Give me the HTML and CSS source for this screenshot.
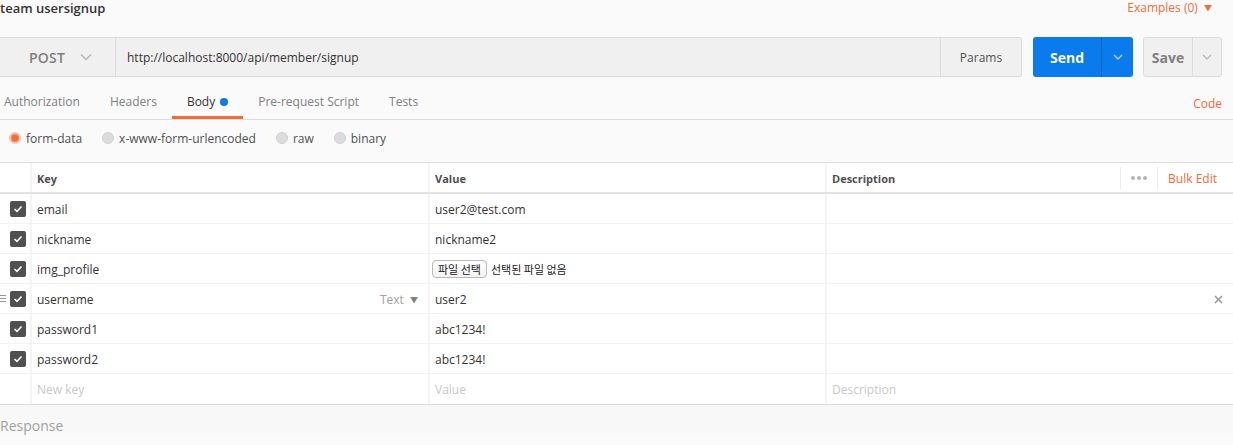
FILE: index.html
```html
<!DOCTYPE html>
<html>
<head>
<meta charset="utf-8">
<link rel="stylesheet" href="styles.css">
</head>
<body>
<div class="page">
  <div class="titlebar">
    <div class="title">team usersignup</div>
    <div class="examples">Examples (0) <span class="caret">&#9660;</span></div>
  </div>

  <div class="urlbar">
    <div class="method">
      <span class="method-name">POST</span>
      <svg class="chev" width="12" height="8" viewBox="0 0 12 8"><path d="M1 1.5 L6 6.5 L11 1.5" fill="none" stroke="#b4b4b4" stroke-width="1.3"/></svg>
    </div>
    <div class="url">http://localhost:8000/api/member/signup</div>
    <div class="params">Params</div>
    <div class="send">
      <span class="send-label">Send</span>
      <span class="send-drop"><svg width="10" height="6" viewBox="0 0 10 6"><path d="M1 1 L5 5 L9 1" fill="none" stroke="#b8d6f8" stroke-width="1.3"/></svg></span>
    </div>
    <div class="save">
      <span class="save-label">Save</span>
      <span class="save-drop"><svg width="10" height="6" viewBox="0 0 10 6"><path d="M1 1 L5 5 L9 1" fill="none" stroke="#b4b4b4" stroke-width="1.1"/></svg></span>
    </div>
  </div>

  <div class="tabs">
    <div class="tablist">
      <div class="tab">Authorization</div>
      <div class="tab">Headers</div>
      <div class="tab active">Body <span class="dot"></span></div>
      <div class="tab">Pre-request Script</div>
      <div class="tab">Tests</div>
    </div>
    <div class="code">Code</div>
  </div>

  <div class="modes">
    <label class="mode"><span class="radio on"></span>form-data</label>
    <label class="mode"><span class="radio"></span>x-www-form-urlencoded</label>
    <label class="mode"><span class="radio"></span>raw</label>
    <label class="mode"><span class="radio"></span>binary</label>
  </div>

  <div class="table">
    <div class="row head">
      <div class="cell chk"></div>
      <div class="cell">Key</div>
      <div class="cell">Value</div>
      <div class="cell desc-head">
        <span>Description</span>
        <span class="head-actions">
          <span class="more"><i></i><i></i><i></i></span>
          <span class="bulk">Bulk Edit</span>
        </span>
      </div>
    </div>

    <div class="row">
      <div class="cell chk"><span class="box"><svg width="10" height="8" viewBox="0 0 10 8"><path d="M1.5 4 L4 6.3 L8.5 1.5" fill="none" stroke="#fff" stroke-width="1.6"/></svg></span></div>
      <div class="cell">email</div>
      <div class="cell">user2@test.com</div>
      <div class="cell"></div>
    </div>
    <div class="row">
      <div class="cell chk"><span class="box"><svg width="10" height="8" viewBox="0 0 10 8"><path d="M1.5 4 L4 6.3 L8.5 1.5" fill="none" stroke="#fff" stroke-width="1.6"/></svg></span></div>
      <div class="cell">nickname</div>
      <div class="cell">nickname2</div>
      <div class="cell"></div>
    </div>
    <div class="row">
      <div class="cell chk"><span class="box"><svg width="10" height="8" viewBox="0 0 10 8"><path d="M1.5 4 L4 6.3 L8.5 1.5" fill="none" stroke="#fff" stroke-width="1.6"/></svg></span></div>
      <div class="cell">img_profile</div>
      <div class="cell file"><span class="filebtn">파일 선택</span><span class="filetext">선택된 파일 없음</span></div>
      <div class="cell"></div>
    </div>
    <div class="row">
      <div class="cell chk"><span class="handle"></span><span class="box"><svg width="10" height="8" viewBox="0 0 10 8"><path d="M1.5 4 L4 6.3 L8.5 1.5" fill="none" stroke="#fff" stroke-width="1.6"/></svg></span></div>
      <div class="cell keytype"><span>username</span><span class="type">Text <span class="tcaret">&#9660;</span></span></div>
      <div class="cell">user2</div>
      <div class="cell del"><svg width="9" height="9" viewBox="0 0 9 9"><path d="M1 1 L8 8 M8 1 L1 8" stroke="#9a9a9a" stroke-width="1.5"/></svg></div>
    </div>
    <div class="row">
      <div class="cell chk"><span class="box"><svg width="10" height="8" viewBox="0 0 10 8"><path d="M1.5 4 L4 6.3 L8.5 1.5" fill="none" stroke="#fff" stroke-width="1.6"/></svg></span></div>
      <div class="cell">password1</div>
      <div class="cell">abc1234!</div>
      <div class="cell"></div>
    </div>
    <div class="row">
      <div class="cell chk"><span class="box"><svg width="10" height="8" viewBox="0 0 10 8"><path d="M1.5 4 L4 6.3 L8.5 1.5" fill="none" stroke="#fff" stroke-width="1.6"/></svg></span></div>
      <div class="cell">password2</div>
      <div class="cell">abc1234!</div>
      <div class="cell"></div>
    </div>
    <div class="row last">
      <div class="cell chk"></div>
      <div class="cell ph">New key</div>
      <div class="cell ph">Value</div>
      <div class="cell ph">Description</div>
    </div>
  </div>

  <div class="response">Response</div>
</div>
</body>
</html>
```

FILE: styles.css
```css
* { box-sizing: border-box; }
html, body { margin: 0; padding: 0; }
body {
  background: #fafafa;
  font-family: "Open Sans", "Noto Sans CJK KR", sans-serif;
  color: #505050;
  width: 1233px;
  height: 445px;
  overflow: hidden;
}
.page { display: flex; flex-direction: column; }

.titlebar {
  display: flex;
  justify-content: space-between;
  align-items: flex-start;
  height: 37px;
  padding-right: 21px;
}
.title {
  font-size: 13px;
  font-weight: 600;
  color: #333;
  line-height: 16px;
}
.examples {
  font-size: 12px;
  color: #f26b3a;
  line-height: 16px;
}
.caret { font-size: 8px; margin-left: 3px; position: relative; top: -1px; }

.urlbar {
  display: flex;
  height: 40px;
  padding-right: 11px;
}
.method {
  width: 116px;
  display: flex;
  align-items: center;
  padding-left: 29px;
  background: #f0f0f0;
  border-top: 1px solid #dcdcdc;
  border-bottom: 1px solid #dcdcdc;
  border-right: 1px solid #dcdcdc;
}
.method-name { font-size: 14px; font-weight: 600; color: #808080; letter-spacing: 0.2px; }
.chev { margin-left: 15px; }
.url {
  flex: 1;
  display: flex;
  align-items: center;
  padding-left: 11px;
  font-size: 12px;
  color: #333;
  background: #f0f0f0;
  border-top: 1px solid #dcdcdc;
  border-bottom: 1px solid #dcdcdc;
  border-right: 1px solid #dcdcdc;
}
.params {
  width: 81px;
  display: flex;
  align-items: center;
  justify-content: center;
  font-size: 12px;
  color: #505050;
  background: #f0f0f0;
  border: 1px solid #dcdcdc;
  border-left: none;
  border-radius: 0 3px 3px 0;
}
.send {
  margin-left: 11px;
  width: 100px;
  display: flex;
  background: #097bed;
  border-radius: 3px;
  color: #fff;
}
.send-label {
  width: 69px;
  display: flex;
  align-items: center;
  justify-content: center;
  font-size: 14px;
  font-weight: 700;
  border-right: 1px solid #0a5eb8;
}
.send-drop { flex: 1; display: flex; align-items: center; justify-content: center; }
.save {
  margin-left: 10px;
  width: 79px;
  display: flex;
  background: #f0f0f0;
  border: 1px solid #dcdcdc;
  border-radius: 3px;
}
.save-label {
  width: 49px;
  display: flex;
  align-items: center;
  justify-content: center;
  font-size: 14px;
  font-weight: 700;
  color: #808080;
  border-right: 1px solid #dcdcdc;
}
.save-drop { flex: 1; display: flex; align-items: center; justify-content: center; }

.tabs {
  display: flex;
  justify-content: space-between;
  align-items: stretch;
  height: 43px;
  border-bottom: 1px solid #dcdcdc;
  padding-right: 11px;
}
.tablist { display: flex; margin-left: -11px; }
.tab {
  padding: 9px 15px 0;
  display: flex;
  align-items: center;
  font-size: 12px;
  color: #808080;
  border-bottom: 3px solid transparent;
}
.tab.active { color: #333; border-bottom-color: #f26b3a; }
.dot {
  display: inline-block;
  width: 8px;
  height: 8px;
  border-radius: 50%;
  background: #097bed;
  margin-left: 5px;
  margin-top: 1px;
}
.code {
  font-size: 12px;
  color: #f26b3a;
  display: flex;
  align-items: center;
  padding-top: 10px;
}

.modes {
  display: flex;
  align-items: center;
  height: 42px;
  padding-left: 9px;
  padding-bottom: 6px;
}
.mode {
  display: flex;
  align-items: center;
  font-size: 12px;
  color: #505050;
  margin-right: 20px;
}
.radio {
  width: 12px;
  height: 12px;
  border-radius: 50%;
  background: #dcdcdc;
  border: 1px solid #d0d0d0;
  margin-right: 5px;
}
.radio.on {
  background: #f26b3a;
  border: 2px solid #f7c5b0;
  box-shadow: inset 0 0 0 1px #f0885d;
}

.table {
  border-top: 1px solid #dcdcdc;
  border-bottom: 1px solid #dcdcdc;
  background: #f4f4f4;
}
.row {
  display: grid;
  grid-template-columns: 30px 396px 395px 1fr;
  column-gap: 2px;
  height: 30px;
  border-bottom: 1px solid #f2f2f2;
}
.row.head { border-bottom: 2px solid #e2e2e2; height: 31px; }
.row.last { border-bottom: none; }
.cell {
  background: #fff;
  display: flex;
  align-items: center;
  padding-left: 5px;
  padding-top: 1px;
  font-size: 12px;
  color: #333;
  min-width: 0;
}
.head .cell { font-size: 11px; font-weight: 700; color: #505050; }
.cell.chk { padding-left: 10px; padding-top: 0; position: relative; }
.box {
  width: 16px;
  height: 16px;
  border-radius: 2px;
  background: #505050;
  display: flex;
  align-items: center;
  justify-content: center;
}
.handle {
  position: absolute;
  left: 0;
  top: 11px;
  width: 6px;
  height: 8px;
  background: linear-gradient(#999 0 1.5px, transparent 1.5px 3px, #999 3px 4.5px, transparent 4.5px 6px, #999 6px 7.5px, transparent 7.5px);
}
.desc-head { justify-content: space-between; padding-right: 16px; }
.head-actions { display: flex; align-items: center; height: 100%; }
.more {
  padding: 0 10px;
  border-left: 1px solid #ececec;
  border-right: 1px solid #ececec;
  height: 22px;
  display: flex;
  align-items: center;
  gap: 2px;
}
.more i {
  display: block;
  width: 4px;
  height: 4px;
  border-radius: 50%;
  background: #b4b4b4;
}
.bulk { color: #f26b3a; font-weight: 400; font-size: 12px; margin-left: 10px; }
.keytype { justify-content: space-between; padding-right: 10px; }
.type { color: #a0a0a0; }
.tcaret { font-size: 8px; color: #808080; margin-left: 3px; position: relative; top: -1px; }
.del { justify-content: flex-end; padding-right: 10px; }
.file { padding-left: 2px; }
.filebtn {
  font-family: "Noto Sans CJK KR", sans-serif;
  font-size: 11px;
  color: #222;
  border: 1px solid #b8b8b8;
  border-radius: 4px;
  background: linear-gradient(#fff, #f2f2f2);
  height: 18px;
  padding: 0 5px;
  display: flex;
  align-items: center;
  margin-right: 4px;
}
.filetext { font-family: "Noto Sans CJK KR", sans-serif; font-size: 11px; color: #222; }
.ph { color: #c8c8c8; }

.response {
  background: #f8f8f8;
  flex: 1;
  height: 60px;
  padding-top: 11px;
  font-size: 14px;
  color: #a0a0a0;
}
```
